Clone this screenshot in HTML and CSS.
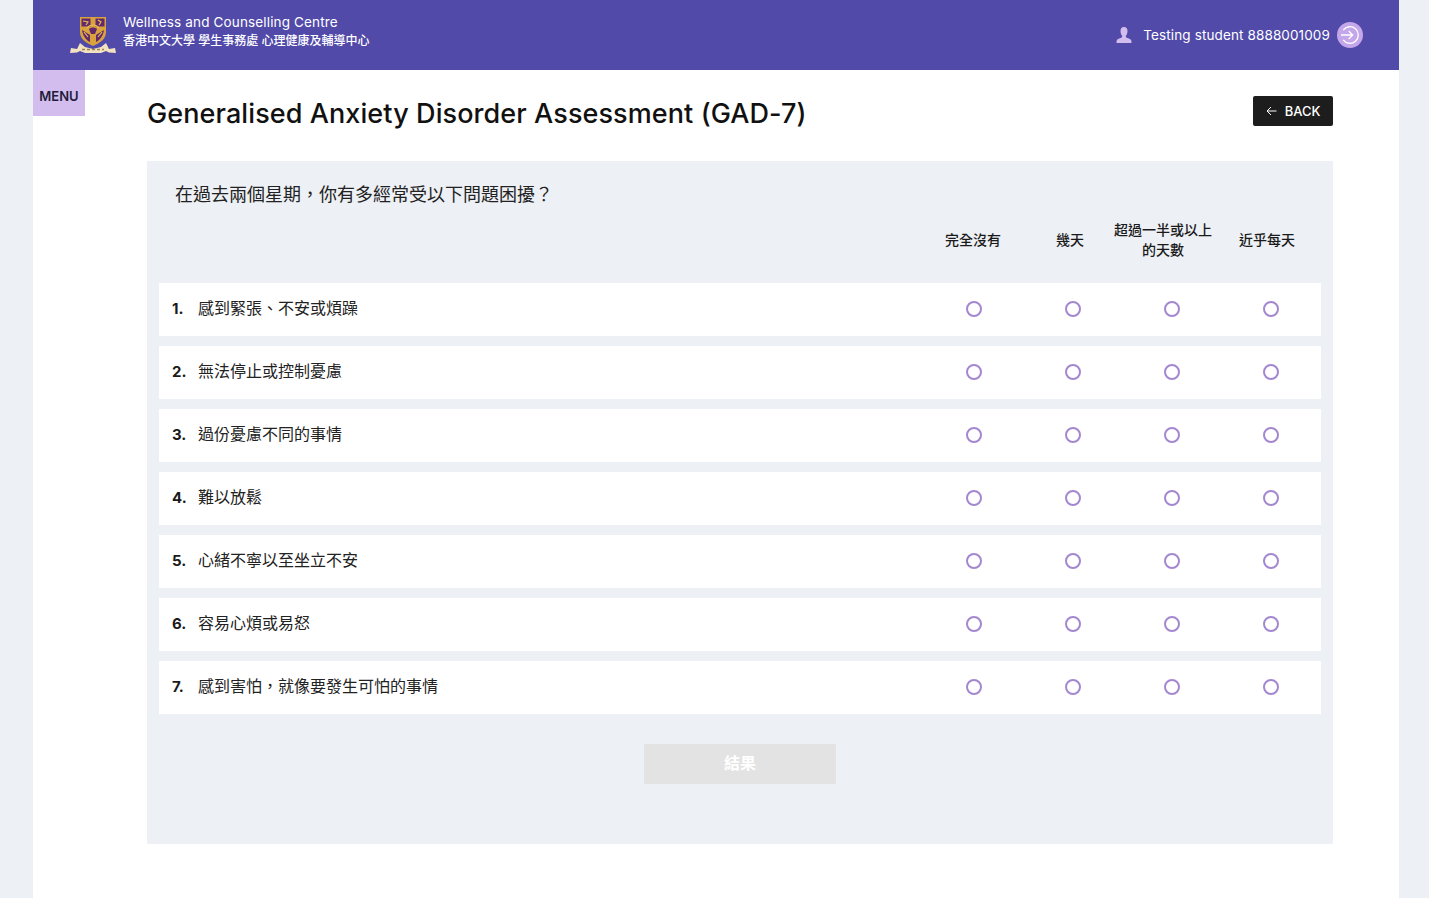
FILE: index.html
```html
<!DOCTYPE html>
<html lang="zh-Hant">
<head>
	<meta charset="utf-8">
	<title>Generalised Anxiety Disorder Assessment (GAD-7)</title>
	<link rel="stylesheet" href="styles.css">
</head>
<body>
	<div class="page">
		<header class="topbar">
			<div class="brand">
				<svg class="crest" width="48" height="38" viewBox="0 0 48 38">
					<path d="M11 1h26v15c0 7-6 11-13 14C17 27 11 23 11 16z" fill="#d9a23c"/>
					<path d="M12.500 2.500h9v8h-9zM26.500 2.500h9v8h-9zM13 14l8 5v7c-4-2-7-6-8-12zM35 14l-8 5v7c4-2 7-6 8-12z" fill="#63296b"/>
					<path d="M14 5l5 1-2 3M29 4l3 2-2 3M15 16l4 5M33 16l-4 5M18 12c3-4 9-4 12 0" fill="none" stroke="#e9bb58" stroke-width="1.200"/>
					<path d="M20 13c2-2 6-2 8 0l-2 5h-4z" fill="#63296b"/>
					<path d="M1 37l1-5 6 1 3-6 5 4 8 2 8-2 5-4 3 6 6-1 1 5-7-.5-3-1.500-5 2H16l-5-2-3 1.500z" fill="#f3e2c0"/>
					<path d="M13 33.500h22" stroke="#9c8150" stroke-width="1.500" stroke-dasharray="3 2"/>
				</svg>
				<div class="brand-text">
					<div class="brand-en">Wellness and Counselling Centre</div>
					<div class="brand-zh">香港中文大學 學生事務處 心理健康及輔導中心</div>
				</div>
			</div>
			<div class="user">
				<svg class="user-icon" width="16" height="16" viewBox="0 0 16 16">
					<path d="M8 0c2.500 0 3.600 1.900 3.500 4.200C11.400 6.300 10.700 8 9.900 8.800c-.2.900 0 1.500.8 1.900 1.700.8 4.100 1.200 4.600 2.700.2.700.2 1.500.2 2.600H.5c0-1.100 0-1.900.2-2.600.5-1.500 2.900-1.900 4.600-2.700.8-.4 1-1 .8-1.900C5.300 8 4.600 6.300 4.500 4.200 4.400 1.900 5.500 0 8 0z" fill="#d2bdee"/>
				</svg>
				<span class="user-name">Testing student 8888001009</span>
				<span class="logout">
					<svg width="26" height="26" viewBox="0 0 26 26" fill="none" stroke="#fff" stroke-width="1.300">
						<path d="M6.200 8.200A8.300 8.300 0 1 1 6.200 17.800"/>
						<path d="M4 13h11.700M11.700 9l4 4-4 4"/>
					</svg>
				</span>
			</div>
		</header>
		<div class="content-row">
			<div class="menu-tab">MENU</div>
			<main class="main">
				<div class="title-row">
					<h1>Generalised Anxiety Disorder Assessment (GAD-7)</h1>
					<a class="back-btn"><span class="back-arrow">
						<svg width="11" height="10" viewBox="0 0 11 10" fill="none" stroke="#fff" stroke-width="1">
							<path d="M10.500 5H1M5 1L1 5l4 4"/>
						</svg></span>BACK</a>
				</div>
				<section class="panel">
					<p class="question">在過去兩個星期，你有多經常受以下問題困擾？</p>
					<div class="head-row">
						<div class="head-cell head-none">完全沒有</div>
						<div class="head-cell head-few">幾天</div>
						<div class="head-cell head-half">超過一半或以上<br>的天數</div>
						<div class="head-cell head-daily">近乎每天</div>
					</div>
					<div class="rows">
						<div class="row"><b class="num">1.</b><span class="label">感到緊張、不安或煩躁</span><span class="radios"><i></i><i></i><i></i><i></i></span></div>
						<div class="row"><b class="num">2.</b><span class="label">無法停止或控制憂慮</span><span class="radios"><i></i><i></i><i></i><i></i></span></div>
						<div class="row"><b class="num">3.</b><span class="label">過份憂慮不同的事情</span><span class="radios"><i></i><i></i><i></i><i></i></span></div>
						<div class="row"><b class="num">4.</b><span class="label">難以放鬆</span><span class="radios"><i></i><i></i><i></i><i></i></span></div>
						<div class="row"><b class="num">5.</b><span class="label">心緒不寧以至坐立不安</span><span class="radios"><i></i><i></i><i></i><i></i></span></div>
						<div class="row"><b class="num">6.</b><span class="label">容易心煩或易怒</span><span class="radios"><i></i><i></i><i></i><i></i></span></div>
						<div class="row"><b class="num">7.</b><span class="label">感到害怕，就像要發生可怕的事情</span><span class="radios"><i></i><i></i><i></i><i></i></span></div>
					</div>
					<div class="submit-wrap"><button class="submit">結果</button></div>
				</section>
			</main>
		</div>
	</div>
</body>
</html>
```

FILE: styles.css
```css
html, body {
	margin: 0;
	height: 100%;
}
body {
	background: #edf0f5;
	font-family: "Inter", "Noto Sans CJK TC", sans-serif;
	color: #1a1a1a;
	overflow: hidden;
}
.page {
	width: 1366px;
	height: 898px;
	margin-left: 33px;
	background: #fff;
}
.topbar {
	height: 70px;
	background: #514aa8;
	color: #fff;
	display: flex;
	align-items: center;
	justify-content: space-between;
	padding: 0 36px 0 36px;
}
.brand {
	display: flex;
	align-items: center;
}
.crest {
	margin-right: 6px;
	margin-top: -1px;
}
.brand-text {
	margin-bottom: 8px;
}
.brand-en {
	font-size: 13.500px;
	line-height: 18px;
	letter-spacing: .15px;
}
.brand-zh {
	font-size: 12px;
	line-height: 18px;
	font-weight: 500;
	margin-top: 1px;
}
.user {
	display: flex;
	align-items: center;
}
.user-icon {
	margin-right: 11px;
	margin-left: 1px;
}
.user-name {
	font-size: 13.500px;
	letter-spacing: .12px;
	margin-right: 7px;
}
.logout {
	width: 26px;
	height: 26px;
	border-radius: 50%;
	background: #c4a6ea;
	display: flex;
}
.content-row {
	display: flex;
}
.menu-tab {
	width: 52px;
	height: 46px;
	background: #d2bdee;
	font-size: 13px;
	font-weight: 600;
	line-height: 53px;
	text-align: center;
	color: #221c3a;
	flex-shrink: 0;
}
.main {
	width: 1186px;
	margin-left: 62px;
}
.title-row {
	height: 91px;
	display: flex;
	align-items: flex-start;
	justify-content: space-between;
}
h1 {
	margin: 26px 0 0;
	font-size: 27px;
	line-height: 36px;
	font-weight: 500;
	letter-spacing: .09px;
	color: #111;
}
.back-btn {
	margin-top: 26px;
	width: 80px;
	height: 30px;
	background: #1d1d1d;
	border-radius: 2px;
	color: #fff;
	font-size: 13px;
	font-weight: 500;
	display: flex;
	align-items: center;
	justify-content: center;
}
.back-arrow {
	display: flex;
	margin-right: 8px;
}
.panel {
	height: 683px;
	background: #edf0f5;
	padding: 0 12px;
	box-sizing: border-box;
}
.question {
	margin: 0;
	padding: 22px 0 0 16px;
	font-size: 18px;
	line-height: 24px;
	color: #222;
}
.head-row {
	display: flex;
	justify-content: flex-end;
	height: 63px;
	margin-top: 13px;
}
.head-cell {
	font-size: 14px;
	line-height: 20px;
	font-weight: 500;
	text-align: center;
	height: 40px;
	display: flex;
	align-items: center;
	justify-content: center;
}
.head-none, .head-daily {
	width: 108px;
}
.head-few {
	width: 86px;
}
.head-half {
	width: 100px;
}
.rows {
	display: flex;
	flex-direction: column;
	gap: 10px;
}
.row {
	height: 53px;
	background: #fff;
	display: flex;
	align-items: center;
	padding-left: 13px;
}
.num {
	width: 26px;
	font-size: 15px;
	font-weight: 700;
	margin-bottom: 2px;
}
.label {
	font-size: 16px;
	flex: 1;
	color: #222;
	margin-bottom: 6px;
}
.radios {
	display: flex;
	padding-right: 1px;
	margin-bottom: 2px;
}
.radios i {
	width: 99px;
	height: 16px;
	display: flex;
	justify-content: center;
}
.radios i::before {
	content: "";
	width: 16px;
	height: 16px;
	box-sizing: border-box;
	border: 2px solid #a387cf;
	border-radius: 50%;
	background: #fff;
}
.submit-wrap {
	display: flex;
	justify-content: center;
	margin-top: 30px;
}
.submit {
	width: 192px;
	height: 40px;
	border: 0;
	padding: 0 0 4px;
	background: #e3e3e3;
	color: #fff;
	font-family: inherit;
	font-size: 16px;
	font-weight: 700;
}
```
